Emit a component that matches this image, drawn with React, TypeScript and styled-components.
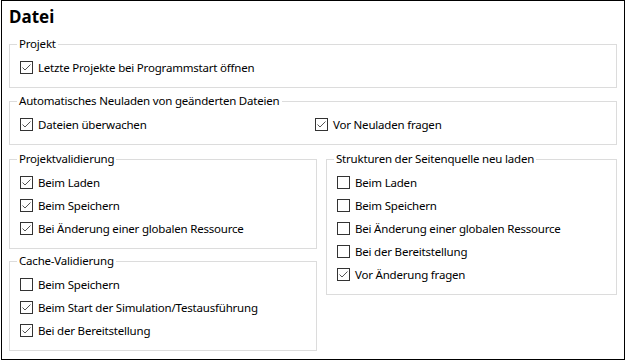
import React from 'react';
import styled, { createGlobalStyle } from 'styled-components';

const GlobalStyle = createGlobalStyle`
  html, body {
    margin: 0;
    padding: 0;
    background: #ffffff;
  }
  body {
    font-family: "Noto Sans", "Liberation Sans", sans-serif;
    font-size: 11.5px;
    letter-spacing: -0.2px;
    color: #000;
  }
`;

const Panel = styled.div`
  box-sizing: border-box;
  width: 624px;
  height: 360px;
  margin-left: 1px;
  border: 1px solid #000;
  padding: 4px 7px 0 7px;
  display: flex;
  flex-direction: column;
  gap: 5px;
`;

const Title = styled.h1`
  margin: 0;
  font-size: 17px;
  letter-spacing: 0;
  font-weight: 700;
  line-height: 24px;
  height: 26px;
`;

const Columns = styled.div`
  display: grid;
  grid-template-columns: 308px 1fr;
  column-gap: 9px;
  align-items: start;
  margin-top: 1px;
`;

const Stack = styled.div`
  display: flex;
  flex-direction: column;
  gap: 4px;
`;

const Group = styled.fieldset`
  margin: 0;
  padding: 4px 10px 8px 10px;
  border: 1px solid #dcdcdc;
  min-width: 0;
`;

const Legend = styled.legend`
  margin-left: -3px;
  padding: 0 2px;
  line-height: 16px;
`;

const Row = styled.div<{ $cols?: string }>`
  display: grid;
  grid-template-columns: ${p => p.$cols || '1fr'};
`;

const Item = styled.label`
  display: flex;
  align-items: center;
  gap: 5px;
  height: 23px;
  white-space: nowrap;
`;

const Box = styled.svg`
  flex: none;
  display: block;
`;

const Check = ({ on }: { on: boolean }) => (
  <Box width="13" height="13" viewBox="0 0 13 13">
    <rect x="0.5" y="0.5" width="12" height="12" fill="#fff" stroke="#333" />
    {on && (
      <polyline
        points="2.5,6.5 5,9 10.5,3.5"
        fill="none"
        stroke="#555"
        strokeWidth="1"
      />
    )}
  </Box>
);

const Option = ({ on, children }: { on: boolean; children: React.ReactNode }) => (
  <Item>
    <Check on={on} />
    <span>{children}</span>
  </Item>
);

export default function App() {
  return (
    <>
      <GlobalStyle />
      <Panel>
        <Title>Datei</Title>
        <Group>
          <Legend>Projekt</Legend>
          <Option on>Letzte Projekte bei Programmstart öffnen</Option>
        </Group>
        <Group>
          <Legend>Automatisches Neuladen von geänderten Dateien</Legend>
          <Row $cols="295px 1fr">
            <Option on>Dateien überwachen</Option>
            <Option on>Vor Neuladen fragen</Option>
          </Row>
        </Group>
        <Columns>
          <Stack>
            <Group>
              <Legend>Projektvalidierung</Legend>
              <Option on>Beim Laden</Option>
              <Option on>Beim Speichern</Option>
              <Option on>Bei Änderung einer globalen Ressource</Option>
            </Group>
            <Group>
              <Legend>Cache-Validierung</Legend>
              <Option on={false}>Beim Speichern</Option>
              <Option on>Beim Start der Simulation/Testausführung</Option>
              <Option on>Bei der Bereitstellung</Option>
            </Group>
          </Stack>
          <Group>
            <Legend>Strukturen der Seitenquelle neu laden</Legend>
            <Option on={false}>Beim Laden</Option>
            <Option on={false}>Beim Speichern</Option>
            <Option on={false}>Bei Änderung einer globalen Ressource</Option>
            <Option on={false}>Bei der Bereitstellung</Option>
            <Option on>Vor Änderung fragen</Option>
          </Group>
        </Columns>
      </Panel>
    </>
  );
}
